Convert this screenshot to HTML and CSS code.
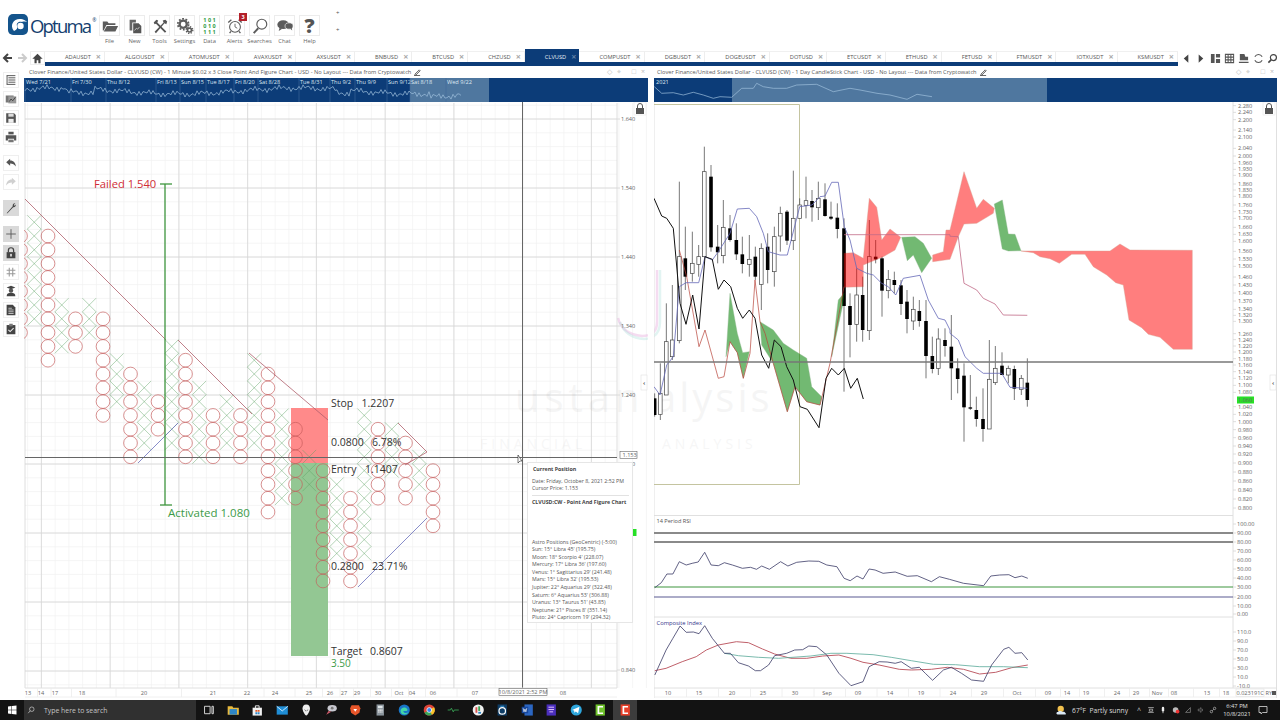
FILE: index.html
```html
<!DOCTYPE html>
<html lang="en">
<head>
<meta charset="utf-8">
<title>Optuma</title>
<link rel="stylesheet" href="styles.css">
</head>
<body>
<div class="app">
  <header class="top">
    <div class="logo">
      <svg class="logo-mark" viewBox="0 0 20 21"><rect x="0" y="0" width="20" height="21" rx="5" fill="#14548c"/><path d="M6 17C1 11 6 4 13 5c4 .6 6 3 6 3-4-1-5 0-5 0-3-1-6 1-5 4 .5 2 0 4-3 5z" fill="#fff"/><circle cx="12.5" cy="12" r="3.2" fill="#fff"/></svg>
      <span class="logo-text">Optuma</span><span class="logo-r">®</span>
    </div>
    <div class="tools">
      <div class="tool"><div class="tbox"><svg viewBox="0 0 20 20"><path d="M2 5h5l1.500 2H16v2H6L3 15H2zM6.500 10H19l-3 6H3z" fill="#5c5c5c"/></svg></div><span>File</span></div>
      <div class="tool"><div class="tbox"><svg viewBox="0 0 20 20"><path d="M4 3h7v3H7v9H4z" fill="#666"/><path d="M8 7h6l3 3v8H8z" fill="#555"/><path d="M9.500 15l2-2.500 1.500 1 2-2.500" stroke="#ddd" stroke-width=".8" fill="none"/></svg></div><span>New</span></div>
      <div class="tool"><div class="tbox"><svg viewBox="0 0 20 20"><path d="M4 16.500L14 6l-1-2 3-1 2 2-1 3-2-1L5.500 18z" fill="#555"/><path d="M3 6l3-3 2 1-1 2 10 10-1.500 1.500L5.500 7.500 4 8z" fill="#555"/></svg></div><span>Tools</span></div>
      <div class="tool"><div class="tbox"><svg viewBox="0 0 20 20"><circle cx="8" cy="8" r="4" fill="none" stroke="#5c5c5c" stroke-width="2.600"/><circle cx="8" cy="8" r="6" fill="none" stroke="#5c5c5c" stroke-width="2" stroke-dasharray="2 1.770"/><circle cx="15" cy="14.500" r="2.200" fill="none" stroke="#5c5c5c" stroke-width="1.800"/><circle cx="15" cy="14.500" r="3.700" fill="none" stroke="#5c5c5c" stroke-width="1.500" stroke-dasharray="1.500 1.400"/></svg></div><span>Settings</span></div>
      <div class="tool"><div class="tbox tdata">1 0 1<br>0 1 0<br>1 1 1</div><span>Data</span></div>
      <div class="tool"><div class="tbox"><svg viewBox="0 0 20 20"><circle cx="10" cy="11" r="6" fill="none" stroke="#5c5c5c" stroke-width="1.200"/><path d="M10 7.500V11l2.500 1.500" stroke="#5c5c5c" stroke-width="1" fill="none"/><path d="M2.500 6L6 3M17.500 6L14 3M5.500 16l-1.500 2M14.500 16l1.500 2" stroke="#5c5c5c" stroke-width="1.500"/></svg></div><b class="badge">3</b><span>Alerts</span></div>
      <div class="tool"><div class="tbox"><svg viewBox="0 0 20 20"><circle cx="12" cy="8" r="5.500" fill="none" stroke="#5c5c5c" stroke-width="1.300"/><path d="M8 12.500L3 18" stroke="#5c5c5c" stroke-width="2.200"/></svg></div><span>Searches</span></div>
      <div class="tool"><div class="tbox"><svg viewBox="0 0 20 20"><ellipse cx="8" cy="8.500" rx="6.500" ry="4.800" fill="#5c5c5c"/><path d="M4 12l-1 3.500 4-2.500z" fill="#5c5c5c"/><ellipse cx="14.500" cy="10" rx="4.500" ry="3.500" fill="#5c5c5c" stroke="#fff" stroke-width=".7"/><path d="M16 13l2 2-.5-3z" fill="#5c5c5c"/></svg></div><span>Chat</span></div>
      <div class="tool"><div class="tbox thelp">?</div><span>Help</span></div>
    </div>
    <div class="plus"><i>+</i><i>+</i></div>
  </header>

  <nav class="tabbar">
    <div class="tabnav">
      <svg viewBox="0 0 15 14"><path d="M12 7H5M8 3L4 7l4 4" stroke="#444" stroke-width="2" fill="none"/></svg>
      <svg viewBox="0 0 15 14"><path d="M3 7h7M7 3l4 4-4 4" stroke="#ccc" stroke-width="2" fill="none"/></svg>
      <svg class="home" viewBox="0 0 15 14"><path d="M7.500 2L1.500 8H4v5h2.500V9.500h2V13H11V8h2.500z" fill="#444"/></svg>
    </div>
    <div class="tabs">
      <div class="tab"><span>ADAUSDT</span><b>×</b></div>
      <div class="tab"><span>ALGOUSDT</span><b>×</b></div>
      <div class="tab"><span>ATOMUSDT</span><b>×</b></div>
      <div class="tab"><span>AVAXUSDT</span><b>×</b></div>
      <div class="tab"><span>AXSUSDT</span><b>×</b></div>
      <div class="tab"><span>BNBUSD</span><b>×</b></div>
      <div class="tab"><span>BTCUSD</span><b>×</b></div>
      <div class="tab"><span>CHZUSD</span><b>×</b></div>
      <div class="tab active"><span>CLVUSD</span><b>×</b></div>
      <div class="tab"><span>COMPUSDT</span><b>×</b></div>
      <div class="tab"><span>DGBUSDT</span><b>×</b></div>
      <div class="tab"><span>DOGEUSDT</span><b>×</b></div>
      <div class="tab"><span>DOTUSD</span><b>×</b></div>
      <div class="tab"><span>ETCUSDT</span><b>×</b></div>
      <div class="tab"><span>ETHUSD</span><b>×</b></div>
      <div class="tab"><span>FETUSD</span><b>×</b></div>
      <div class="tab"><span>FTMUSDT</span><b>×</b></div>
      <div class="tab"><span>IOTXUSDT</span><b>×</b></div>
      <div class="tab"><span>KSMUSDT</span><b>×</b></div>
    </div>
    <div class="tabright">
      <svg viewBox="0 0 12 12"><path d="M8 1.500L3 6l5 4.500z" fill="#444"/></svg>
      <svg viewBox="0 0 12 12"><path d="M4 1.500L9 6l-5 4.500z" fill="#444"/></svg>
      <svg viewBox="0 0 12 12"><path d="M1 1h4v10H1zM6.500 1H11v4H6.500zM6.500 6.500H11V11H6.500z" fill="#555"/></svg>
      <svg viewBox="0 0 12 12"><path d="M1.500 1v10M4.500 1v10M7.500 1v10M10.500 1v10M1 1.500h10M1 4.500h10M1 7.500h10M1 10.500h10" stroke="#555" stroke-width="1.100" fill="none"/></svg>
      <svg viewBox="0 0 12 12"><path d="M2 1h5l1 3h3v4H2zM1 9.500h10.500V11H1z" fill="#555"/></svg>
      <svg viewBox="0 0 12 12"><path d="M2 4a4.500 4.500 0 0 1 8 0M10 8a4.500 4.500 0 0 1-8 0" stroke="#555" stroke-width="1.100" fill="none"/></svg>
      <svg viewBox="0 0 12 12"><circle cx="7" cy="5" r="3.300" fill="none" stroke="#444" stroke-width="1.300"/><path d="M4.500 7.500L1.500 10.500" stroke="#444" stroke-width="1.800"/></svg>
    </div>
  </nav>

  <main class="work">
    <aside class="side">
      <div class="sbtn"><svg viewBox="0 0 16 16"><path d="M3 3h10M5 5.500h8M5 8h8M5 10.500h8M3 13h10M3.500 3v10" stroke="#555" stroke-width="1.100" fill="none"/></svg></div>
      <div class="sbtn"><svg viewBox="0 0 16 16"><path d="M2 4h9v8H2z" fill="#777"/><path d="M5 5h9v8H5z" fill="#999"/><path d="M6 11l2-3 2 2 3-4" stroke="#333" stroke-width=".9" fill="none"/></svg></div>
      <div class="sbtn"><svg viewBox="0 0 16 16"><path d="M2.500 2.500h9l2 2v9h-11z" fill="#555"/><path d="M5 3h6v3.500H5z" fill="#ddd"/><path d="M5 9h6v4.500H5z" fill="#eee"/></svg></div>
      <div class="sbtn"><svg viewBox="0 0 16 16"><path d="M5 2h6v3H5z" fill="#555"/><path d="M2 6h12v6h-2.500v-2h-7v2H2z" fill="#555"/><path d="M5 11h6v3H5z" fill="#777"/></svg></div>
      <div class="sbtn gap"><svg viewBox="0 0 16 16"><path d="M7 3L2.500 7 7 11V8.500c3 0 5 1 6.500 3.500 0-4-2.500-7-6.500-7z" fill="#555"/></svg></div>
      <div class="sbtn"><svg viewBox="0 0 16 16"><path d="M9 3l4.500 4L9 11V8.500c-3 0-5 1-6.500 3.500 0-4 2.500-7 6.500-7z" fill="#d0d0d0"/></svg></div>
      <div class="sbtn gap on"><svg viewBox="0 0 16 16"><path d="M3 14l7-8c-.5-2 1-3.500 3-3.300L11 4.500l1 1 1.500-1.500c.3 2-1.500 3.500-3 3L4 14z" fill="#444"/></svg></div>
      <div class="sbtn gap on"><svg viewBox="0 0 16 16"><path d="M8 2.500v11M2.500 8h11" stroke="#555" stroke-width="1"/></svg></div>
      <div class="sbtn on"><svg viewBox="0 0 16 16"><path d="M5 7V5a3 3 0 0 1 6 0v2" stroke="#444" stroke-width="1.400" fill="none"/><rect x="3" y="7" width="10" height="7" fill="#444"/><rect x="7" y="9" width="2" height="3" fill="#ddd"/></svg></div>
      <div class="sbtn"><svg viewBox="0 0 16 16"><path d="M6 3v10M10 3v10M3 6h10M3 10h10" stroke="#999" stroke-width="1.200"/></svg></div>
      <div class="sbtn"><svg viewBox="0 0 16 16"><path d="M3 4l5-2 5 2-5 2z" fill="#444"/><circle cx="8" cy="7.500" r="2.500" fill="#555"/><path d="M3 14c0-3 2-4 5-4s5 1 5 4z" fill="#444"/></svg></div>
      <div class="sbtn"><svg viewBox="0 0 16 16"><path d="M3 2h7l3 3v9H3z" fill="#444"/><path d="M5 6h4M5 8h6M5 10h6M5 12h6" stroke="#eee" stroke-width=".8"/></svg></div>
      <div class="sbtn"><svg viewBox="0 0 16 16"><path d="M3 3.500h10V14H3z" fill="#444"/><path d="M6 2h4v3H6z" fill="#777"/><path d="M5 9l2 2 4-4" stroke="#eee" stroke-width="1.200" fill="none"/></svg></div>
    </aside>

    <section class="panel">
      <div class="ptitle"><span>Clover Finance/United States Dollar - CLVUSD (CW) - 1 Minute $0.02 x 3 Close Point And Figure Chart - USD - No Layout --- Data from Cryptowatch</span>
        <svg class="pen" viewBox="0 0 8 8"><path d="M1 6L6 1l1 1-5 5zM0 7.500h7" stroke="#333" fill="none" stroke-width=".9"/></svg>
        <div class="pctl"><i>◇</i><i>⌖</i><i class="sp">□</i><i>×</i></div></div>
      <svg id="strip1" class="strip" viewBox="24 78 624 24"></svg>
      <div class="chart">
        <svg id="pf" viewBox="24 102 624 598"></svg>
        <div class="tip">
          <b class="tip-h">Current Position</b>
          <p class="tip-d">Date: Friday, October 8, 2021 2:52 PM<br>Cursor Price: 1.153</p>
          <b class="tip-s">CLVUSD:CW - Point And Figure Chart</b>
          <p class="tip-a">Astro Positions (GeoCentric) (-5:00)<br>Sun: 15° Libra 45' (195.75)<br>Moon: 18° Scorpio 4' (228.07)<br>Mercury: 17° Libra 36' (197.60)<br>Venus: 1° Sagittarius 29' (241.48)<br>Mars: 15° Libra 32' (195.53)<br>Jupiter: 22° Aquarius 29' (322.48)<br>Saturn: 6° Aquarius 53' (306.88)<br>Uranus: 13° Taurus 51' (43.85)<br>Neptune: 21° Pisces 8' (351.14)<br>Pluto: 24° Capricorn 19' (294.32)</p>
        </div>
      </div>
    </section>

    <section class="panel right">
      <div class="ptitle"><span>Clover Finance/United States Dollar - CLVUSD (CW) - 1 Day CandleStick Chart - USD - No Layout --- Data from Cryptowatch</span>
        <svg class="pen" viewBox="0 0 8 8"><path d="M1 6L6 1l1 1-5 5zM0 7.500h7" stroke="#333" fill="none" stroke-width=".9"/></svg>
        <div class="pctl"><i>◇</i><i>⌖</i><i class="sp">□</i><i>×</i></div></div>
      <svg id="strip2" class="strip" viewBox="654 78 623 24"></svg>
      <div class="chart"><svg id="ichi" viewBox="654 102 623 598"></svg></div>
    </section>
  </main>

  <footer class="taskbar">
    <svg class="win" viewBox="0 0 10 10"><path d="M1 1.600l3.500-.5v3.600H1zM5 1l4.500-.6v4.300H5zM1 5.300h3.500v3.600L1 8.400zM5 5.300h4.500v4.300L5 9z" fill="#fff"/></svg>
    <div class="search"><svg viewBox="0 0 10 10"><circle cx="6" cy="4" r="2.800" fill="none" stroke="#ddd" stroke-width=".8"/><path d="M4 6L1.500 9" stroke="#ddd" stroke-width=".8"/></svg><span>Type here to search</span></div>
    <div class="apps">
      <svg viewBox="0 0 14 14"><path d="M3 3h6v8H3zM11 3h1.500v8H11z" fill="none" stroke="#ddd" stroke-width="1"/></svg>
      <svg viewBox="0 0 14 14"><path d="M1 3h5l1 1.500h6V12H1z" fill="#e8b93d"/><path d="M3 6h8v6H3z" fill="#2f86c5"/></svg>
      <svg viewBox="0 0 14 14"><path d="M2 4.500h10V13H2z" fill="#f2f2f2"/><path d="M5 5V2.500h4V5" stroke="#f2f2f2" fill="none"/><path d="M5 7h2v2H5zM7.500 7h2v2h-2z" fill="#e05b2b"/><path d="M5 9.500h2v2H5zM7.500 9.500h2v2h-2z" fill="#2f86c5"/></svg>
      <svg viewBox="0 0 14 14"><path d="M1 3h12v9H1z" fill="#1f8ed6"/><path d="M1 3l6 5 6-5" stroke="#cfeaff" fill="none"/></svg>
      <svg viewBox="0 0 14 14"><path d="M7 1c3 0 4 2 4 4.500S8.500 13 7 13 3 8 3 5.500 4 1 7 1z" fill="#eee"/><path d="M4.500 6l2 1.500v1zM9.500 6l-2 1.500v1z" fill="#222"/></svg>
      <svg viewBox="0 0 14 14"><ellipse cx="8" cy="5" rx="5" ry="3.500" fill="#c8c8d0"/><path d="M4 8l-2.500 4L7 9z" fill="#d05a6a"/><circle cx="8" cy="5" r="1.500" fill="#777"/></svg>
      <svg viewBox="0 0 14 14"><path d="M3 2h8l1.500 3-1 5L7 13 2.500 10l-1-5z" fill="#e8562a"/><path d="M5 6h4L7 9z" fill="#fff"/></svg>
      <svg viewBox="0 0 14 14"><path d="M3 1h8v12H3z" fill="#8a949c"/><path d="M4.500 2.500h5v2.500h-5z" fill="#dfe5e8"/><path d="M4.500 6.500h1.500v1.200H4.500zM6.300 6.500h1.500v1.200H6.300zM8.100 6.500h1.500v1.200H8.100zM4.500 8.500h1.500v1.200H4.500zM6.300 8.500h1.500v1.200H6.300zM8.100 8.500h1.500v1.200H8.100z" fill="#eee"/></svg>
      <svg viewBox="0 0 14 14"><circle cx="7" cy="7" r="6" fill="#1976c9"/><path d="M3 8c0-3 3-4.500 5.500-3.500C11 5.500 11 8 9 8H6c0 2 3 3 5.500 1.500C10 12.500 3 13 3 8z" fill="#44d6a8"/></svg>
      <svg viewBox="0 0 14 14"><circle cx="7" cy="7" r="6" fill="#de4437"/><path d="M7 7L1.800 10A6 6 0 0 0 10 12.200z" fill="#3aa757"/><path d="M7 7L10 12.200A6 6 0 0 0 12.200 4z" fill="#f7c52b"/><circle cx="7" cy="7" r="2.600" fill="#3c84ef" stroke="#fff" stroke-width=".8"/></svg>
      <svg viewBox="0 0 14 14"><path d="M1 7h3l1-2 2 4 1-2h5" stroke="#3aa757" fill="none" stroke-width=".9"/></svg>
      <svg viewBox="0 0 14 14"><circle cx="7" cy="7" r="6" fill="#f1f1f1"/><path d="M4 4h2v6H4z" fill="#d9534f"/><path d="M7 3h2v5H7z" fill="#3aa757"/><path d="M7 9h3v2H7z" fill="#2f86c5"/></svg>
      <svg viewBox="0 0 14 14"><path d="M2 1h10v12H2z" fill="#0e3d66"/><circle cx="7" cy="8" r="3.500" fill="none" stroke="#fff" stroke-width="1.300"/><path d="M5 3h4" stroke="#3aa0e0"/></svg>
      <svg viewBox="0 0 14 14"><path d="M4 1h9v12H4z" fill="#2b66c2"/><path d="M1 3.500h7v7H1z" fill="#17479c"/><path d="M2.500 5l1 4 1-3 1 3 1-4" stroke="#fff" fill="none" stroke-width=".7"/></svg>
      <svg viewBox="0 0 14 14"><path d="M2 1h10v12H2z" fill="#4b2fbd"/><path d="M4 4h6M4 6.500h6M5 9h4" stroke="#e8c9ff"/></svg>
      <svg viewBox="0 0 14 14"><circle cx="7" cy="7" r="6" fill="#2ea6dc"/><path d="M2.500 7l8-3.500-1.500 7-2.500-2-1.500 1.500-.3-2.500z" fill="#fff"/></svg>
      <svg viewBox="0 0 14 14"><path d="M2 1h10v12H2z" fill="#6fc32c"/><path d="M10 3.500H5v7h5" stroke="#fff" stroke-width="1.800" fill="none"/></svg>
      <svg class="now" viewBox="0 0 14 14"><path d="M2 1h10v12H2z" fill="#e8402a"/><path d="M10 3.500H5v7h5" stroke="#fff" stroke-width="1.800" fill="none"/></svg>
    </div>
    <div class="tray">
      <svg class="wx" viewBox="0 0 14 14"><circle cx="6" cy="5" r="4" fill="#f2c14e"/><path d="M2 12c-2 0-2-3 .5-3 .5-2 5-2 5.500 0 1-1 4-.5 4 1.500 1 0 1 1.500 0 1.500z" fill="#dbe9f6"/></svg>
      <span class="wxt">67°F&nbsp; Partly sunny</span>
      <i class="caret">^</i>
      <div class="tic">
        <svg viewBox="0 0 10 10"><path d="M1.500 2h7M1.500 8h7M3 4h4v2.500H3z" stroke="#ddd" fill="none" stroke-width=".8"/></svg>
        <svg viewBox="0 0 10 10"><rect x="3.500" y="1" width="3" height="6" rx="1.500" fill="#eee"/><path d="M5 7v2" stroke="#eee"/></svg>
        <svg viewBox="0 0 10 10"><circle cx="4.500" cy="5" r="3.500" fill="#bbb"/><circle cx="7" cy="7" r="2.300" fill="#e33"/></svg>
        <svg viewBox="0 0 10 10"><path d="M2 8l6-6v6z" fill="none" stroke="#aaa" stroke-width=".7"/></svg>
        <svg viewBox="0 0 10 10"><path d="M1.500 4h1.500l2-2v6l-2-2H1.500zM6.500 3.500q1 1.500 0 3" fill="none" stroke="#999" stroke-width=".7"/></svg>
        <svg viewBox="0 0 10 10"><circle cx="3" cy="7" r="1.500" fill="none" stroke="#ddd" stroke-width=".7"/><circle cx="7" cy="3" r="1.500" fill="none" stroke="#ddd" stroke-width=".7"/><path d="M4 6l2-2" stroke="#ddd" stroke-width=".7"/></svg>
      </div>
      <div class="clock"><span>6:47 PM</span><span>10/8/2021</span></div>
      <svg class="notif" viewBox="0 0 10 10"><path d="M1 1.500h8v6H4.500L3 9V7.500H1z" fill="none" stroke="#ddd" stroke-width=".8"/></svg>
    </div>
  </footer>
</div>
<script src="script.js"></script>
</body>
</html>
```
FILE: styles.css
```css
* { box-sizing: border-box; margin: 0; padding: 0; }
html, body { width: 1280px; height: 720px; overflow: hidden; background: #fff; }
body { font-family: "Open Sans", "Liberation Sans", sans-serif; color: #555; }
i { font-style: normal; }
.app { width: 1280px; height: 720px; display: flex; flex-direction: column; }

/* header */
.top { height: 49px; display: flex; align-items: flex-start; flex: none; }
.logo { width: 97px; padding: 14px 0 0 8px; display: flex; align-items: flex-start; overflow: hidden; }
.logo-mark { width: 20px; height: 21px; flex: none; }
.logo-text { font-size: 18.500px; line-height: 24px; color: #14406f; margin-left: 2px; letter-spacing: -1.800px; }
.logo-r { font-size: 5px; line-height: 12px; color: #14406f; margin-left: 2px; }
.tools { display: flex; padding-top: 15px; }
.tool { width: 25px; display: flex; flex-direction: column; align-items: center; position: relative; }
.tool span { font-size: 5.800px; line-height: 8px; margin-top: 1px; color: #666; white-space: nowrap; }
.tbox { width: 21px; height: 21px; border: 1px solid #ececec; display: flex; align-items: center; justify-content: center; background: #fff; }
.tbox svg { width: 18px; height: 18px; }
.tdata { color: #2f9a3f; font-size: 5.500px; line-height: 6px; text-align: center; font-weight: 700; }
.thelp { color: #555; font-size: 20px; font-weight: 800; line-height: 20px; }
.badge { position: absolute; top: -2px; right: 0; width: 8px; height: 8px; background: #b3202a; color: #fff; font-size: 5.500px; line-height: 8px; text-align: center; }
.plus { margin-left: 14px; padding-top: 9px; display: flex; flex-direction: column; gap: 9px; color: #555; font-size: 6px; line-height: 8px; }

/* tabs */
.tabbar { height: 17px; flex: none; display: flex; }
.tabnav { width: 45px; flex: none; display: flex; align-items: flex-start; padding-top: 2px; }
.tabnav svg { width: 15px; height: 14px; }
.tabnav .home { border: 1px solid #eee; }
.tabs { width: 1133px; flex: none; display: flex; border-bottom: 4px solid #0c3c78; padding-top: 2px; }
.tab { flex: 1 1 auto; display: flex; justify-content: space-between; align-items: center; padding: 0 3px 0 20px; border-right: 1px solid #eee; border-top: 1px solid #f0f0f0; font-size: 5.700px; color: #555; }
.tab span { white-space: nowrap; }
.tab b { font-size: 9px; line-height: 8px; color: #aaa; margin-left: 4px; }
.tab.active { background: #0c3c78; color: #e8eef5; margin-top: -2px; padding-top: 2px; border: 0; }
.tab.active b { color: #5f7fa5; }
.tabright { flex: 1; display: flex; justify-content: space-between; padding: 4px 2px 0 3px; }
.tabright svg { width: 11px; height: 11px; }

/* body */
.work { flex: 1; min-height: 0; display: flex; }
.side { width: 24px; flex: none; padding: 6px 0 0 3px; display: flex; flex-direction: column; gap: 3px; }
.sbtn { width: 16px; height: 16px; border: 1px solid #efefef; }
.sbtn svg { display: block; width: 14px; height: 14px; }
.sbtn.gap { margin-top: 7px; }
.sbtn.on { background: #d9d9d9; border-color: #d9d9d9; }
.panel { width: 624px; flex: none; display: flex; flex-direction: column; }
.panel.right { width: 623px; margin-left: 6px; }
.ptitle { height: 12px; flex: none; display: flex; align-items: center; padding-left: 5px; font-size: 5.700px; color: #5a5a5a; white-space: nowrap; }
.right .ptitle { padding-left: 3px; }
.pen { width: 7px; height: 7px; margin-left: 3px; }
.pctl { margin-left: auto; display: flex; gap: 5px; padding-right: 3px; color: #bbb; font-size: 7px; line-height: 8px; }
.pctl .sp { margin-left: 6px; }
.strip { display: block; width: 100%; height: 24px; flex: none; background: #0c3c78; }
.chart { flex: 1; min-height: 0; position: relative; }
.chart > svg { display: block; width: 100%; height: 100%; }

/* tooltip over the chart */
.tip { position: absolute; left: 503px; top: 360px; width: 106px; height: 161px; background: #fff; border: 1px solid #e6e6e6; padding: 3px 3px 0 4px; font-size: 5.250px; line-height: 7.550px; color: #555; white-space: nowrap; }
.tip b { display: block; font-weight: 700; color: #444; }
.tip-h { padding-left: 1px; }
.tip-d { margin-top: 4px; padding-bottom: 2px; border-bottom: 1px solid #e2e2e2; }
.tip-s { margin-top: 3px; }
.tip-a { margin-top: 32.500px; }

/* svg chart parts */
.maj { stroke: #d6d6d6; stroke-width: .8; }
.min { stroke: #f0f0f0; stroke-width: .7; }
.ox { stroke: #5aa060; stroke-width: .65; opacity: .7; fill: none; }
.oo { stroke: #c65a5a; stroke-width: .65; fill: none; }
.tl-r { stroke: #b0606c; stroke-width: .8; }
.tl-b { stroke: #6a70bb; stroke-width: .8; }
.act { stroke: #3f963f; stroke-width: 1.300; }
.cur { stroke: #666; stroke-width: 1; }
.ax { font-family: "Open Sans", sans-serif; font-size: 5.600px; fill: #666; }
.axm { text-anchor: middle; }
.big { font-family: "Open Sans", sans-serif; font-size: 10.500px; fill: #333; }
.fail { font-size: 11.200px; fill: #d02c36; }
.actv { font-size: 11.500px; fill: #3c9a48; }
.three { fill: #3c9a48; font-size: 10px; }
.rr { fill: #ff8a8a; }
.gr { fill: #93c793; }
.wm { font-family: "Open Sans", sans-serif; font-size: 40px; letter-spacing: 5px; fill: #000; opacity: .035; }
.wm.tight { letter-spacing: 3px; }
.wm2 { font-family: "Open Sans", sans-serif; font-size: 14px; letter-spacing: 4px; fill: #000; opacity: .03; }
.j1 { fill: none; stroke: #e6a8dd; stroke-width: 2.500; opacity: .4; }
.j2 { fill: none; stroke: #9fdbd4; stroke-width: 2.500; opacity: .3; }
.wick { stroke: #555; stroke-width: .8; }
.cb { fill: #000; }
.cw { fill: #fff; stroke: #444; stroke-width: .7; }
.cred { fill: #ff0000; opacity: .5; stroke: #b04020; stroke-width: .4; }
.cgrn { fill: #008000; opacity: .55; stroke: #2c7a2c; stroke-width: .4; }
.blk { fill: none; stroke: #111; stroke-width: 1; }
.blu { fill: none; stroke: #6468b8; stroke-width: .8; }
.red { fill: none; stroke: #b8433a; stroke-width: .7; }
.pnk { fill: none; stroke: #c06a86; stroke-width: .8; }
.tan { fill: none; stroke: #bdbd95; stroke-width: .9; }
.hgr { stroke: #777; stroke-width: 1.400; }
.hgr2 { stroke: #8a8a8a; stroke-width: 2; }
.sep { stroke: #dcdcdc; stroke-width: .9; }
.sep2 { stroke: #ececec; stroke-width: .8; }
.lv-g { stroke: #3f963f; stroke-width: 1.200; }
.lv-b { stroke: #5a5a92; stroke-width: 1.200; }
.c1 { fill: none; stroke: #3a3a66; stroke-width: .8; }
.c2 { fill: none; stroke: #c0606a; stroke-width: 1; }
.c3 { fill: none; stroke: #58a898; stroke-width: .8; }
.lab1 { font-family: "Open Sans", sans-serif; font-size: 5.600px; fill: #555; }
.lab2 { font-family: "Open Sans", sans-serif; font-size: 5.800px; fill: #33338a; }
.curbox { fill: #fff; stroke: #666; stroke-width: .6; }
.green { fill: #26e026; }
.lockb { fill: #fff; stroke: #eee; stroke-width: .8; }
.lockp { fill: #555; }
.lockl { fill: none; stroke: #555; stroke-width: 1; }
.col { fill: #fff; stroke: #e0e0e0; stroke-width: .6; }
.colt { fill: #555; font-family: "Open Sans", sans-serif; font-size: 6px; font-weight: 700; text-anchor: middle; }
.sp-t { font-family: "Open Sans", sans-serif; font-size: 5.600px; fill: #dfe8f2; }
.sp-w { fill: #4f779f; }
.sp-l { fill: none; stroke: #9fc0dc; stroke-width: .7; }
.sp-v { stroke: #41689a; stroke-width: .6; }
.ptr { fill: #fff; stroke: #222; stroke-width: .6; }

/* taskbar */
.taskbar { height: 20px; flex: none; background: #131313; display: flex; align-items: center; }
.win { width: 10px; height: 10px; margin: 0 7px; flex: none; }
.search { width: 172px; height: 20px; background: #303030; display: flex; align-items: center; padding-left: 3px; flex: none; color: #c4c4c4; font-size: 6.900px; }
.search svg { width: 8px; height: 8px; margin-right: 9px; }
.apps { display: flex; align-items: center; }
.apps svg { width: 24.500px; height: 20px; padding: 3.500px 5.500px; flex: none; }
.apps .now { background: #3c3c3c; }
.tray { margin-left: auto; display: flex; align-items: center; }
.wx { width: 11px; height: 11px; }
.wxt { font-size: 6.700px; color: #ddd; margin-left: 5.500px; white-space: nowrap; }
.caret { color: #ccc; font-size: 7px; margin-left: 9px; }
.tic { display: flex; gap: 4.400px; margin-left: 6px; }
.tic svg { width: 8px; height: 8px; }
.clock { display: flex; flex-direction: column; align-items: center; font-size: 5.800px; line-height: 8px; color: #e0e0e0; margin-left: 9px; width: 22px; white-space: nowrap; }
.notif { width: 10px; height: 10px; margin: 0 12px 0 10px; }
```
FILE: script.js
```js
const pl = (a) => a.map(p => p[0].toFixed(1) + ',' + p[1].toFixed(1)).join(' ');
const Z8 = a => a.map(p => [650 + p[0] / 3, 130 + p[1] / 3]);
const Z9 = a => a.map(p => [950 + p[0] / 3, 100 + p[1] / 3]);
const Z10 = a => a.map(p => [650 + p[0] / 2.488, 510 + p[1] / 3]);
const line = (x1, y1, x2, y2, c) => `<line x1="${x1}" y1="${y1}" x2="${x2}" y2="${y2}" class="${c}"/>`;
const txt = (x, y, s, c) => `<text x="${x}" y="${y}" class="${c}">${s}</text>`;
const poly = (a, c) => `<polygon points="${pl(a)}" class="${c}"/>`;
const path = (a, c) => `<polyline points="${pl(a)}" class="${c}"/>`;
const lock = (x, y) => `<rect x="${x - 6}" y="${y - 7}" width="12" height="13" class="lockb"/><path d="M${x - 2.500} ${y - 1}v-2a2.500 2.500 0 0 1 5 0v2" class="lockl"/><rect x="${x - 4}" y="${y - 1}" width="8" height="6" class="lockp"/>`;
const collapse = (x, y) => `<rect x="${x - 3}" y="${y - 8}" width="6" height="15" class="col"/><text x="${x}" y="${y + 1.500}" class="colt">‹</text>`;
const arc = `<path d="M618 318Q622 334 642 336Q657 336 657 322V270" class="j1"/><path d="M620 322Q626 338 644 339Q660 338 660 322V270" class="j2"/>`;

/* ---------- Point and figure chart ---------- */
(function () {
  let s = '';
  const L = 25, R = 617, T = 103, B = 688;
  for (let i = -1; i < 45; i++) { const x = 41.4 + 13.75 * i; if (x > L) s += line(x, T, x, B, 'min'); }
  for (let j = -1; j < 42; j++) { const y = 119 + 13.8 * j; s += line(L, y, R, y, 'min'); }
  for (let i = 0; i < 9; i++) { const x = 41.4 + 68.75 * i; s += line(x, T, x, B, 'maj'); }
  for (let j = 0; j < 9; j++) { const y = 119 + 69 * j; s += line(L, y, R, y, 'maj'); }
  s += txt(515, 412, 'ustan', 'wm') + txt(480, 449, 'FINANCIAL', 'wm2') + arc;
  s += line(L, 103, L, B, 'maj') + line(R, 103, R, B, 'maj');
  s += `<rect x="291" y="408" width="37" height="55" class="rr"/><rect x="291" y="463" width="37" height="193" class="gr"/>`;
  const cols = [['O', 0, 7], ['X', -1, 6], ['O', 0, 9], ['X', 5, 8], ['O', 6, 8], ['X', 5, 7], ['O', 6, 13], ['X', 9, 12], ['O', 10, 16], ['X', 11, 15], ['O', 12, 14], ['X', 8, 15], ['O', 9, 16], ['X', 11, 16], ['O', 13, 16], ['X', 12, 15], ['O', 13, 16], ['X', 9, 15], ['O', 10, 20], ['X', 13, 19], ['O', 14, 19], ['X', 16, 18], ['O', 17, 25], ['X', 18, 23], ['O', 19, 25], ['X', 13, 23], ['O', 14, 19], ['X', 14, 17], ['O', 15, 19], ['X', 16, 18], ['O', 17, 21]];
  const d = 6.9;
  cols.forEach((c, n) => {
    const x = 48 + 13.75 * (n - 2);
    for (let r = c[1]; r <= c[2]; r++) {
      const y = 236 + 13.8 * r;
      if (c[0] === 'O') s += `<circle cx="${x}" cy="${y}" r="6.850" class="oo"/>`;
      else s += `<path d="M${x - d} ${y - d}L${x + d} ${y + d}M${x - d} ${y + d}L${x + d} ${y - d}" class="ox"/>`;
    }
  });
  s += line(25, 199, 166, 340, 'tl-r') + line(178, 340, 252, 414, 'tl-r') + line(249, 353, 328, 420, 'tl-r') + line(398, 423, 427, 452, 'tl-r') + line(405, 465, 427, 452, 'tl-r');
  s += line(138, 463, 178, 423, 'tl-b') + line(358, 587, 427, 518, 'tl-b');
  s += line(165, 184, 165, 505, 'act') + line(160, 184, 172, 184, 'act') + line(160, 505, 172, 505, 'act');
  s += line(25, 457.5, 617, 457.5, 'cur') + line(522.5, 102, 522.5, 688, 'cur');
  s += txt(94, 188, 'Failed 1.540', 'big fail') + txt(168, 517, 'Activated 1.080', 'big actv');
  s += txt(331, 407, 'Stop', 'big') + txt(361.5, 407, '1.2207', 'big');
  s += txt(331, 446, '0.0800', 'big') + txt(372, 446, '6.78%', 'big');
  s += txt(331, 473, 'Entry', 'big') + txt(365, 473, '1.1407', 'big');
  s += txt(331, 570, '0.2800', 'big') + txt(372, 570, '23.71%', 'big');
  s += txt(331, 655, 'Target', 'big') + txt(370, 655, '0.8607', 'big');
  s += txt(331, 667, '3.50', 'big three');
  [[1.640, 119], [1.540, 188], [1.440, 257], [1.340, 326], [1.240, 395], [1.140, 464], [0.840, 670]].forEach(a => {
    s += line(617, a[1], 620, a[1], 'maj') + txt(621, a[1] + 2, a[0].toFixed(3), 'ax');
  });
  s += `<rect x="620" y="451.500" width="17" height="7" class="curbox"/>` + txt(622.5, 457, '1.153', 'ax');
  s += `<rect x="633" y="529" width="3.500" height="7" class="green"/>`;
  s += line(25, 688, 617, 688, 'sep') + line(25, 697, 617, 697, 'sep2');
  const ax = [[28, '13'], [41, '14'], [55, '17'], [82, '18'], [144, '20'], [213, '21'], [247, '22'], [275, '24'], [309, '25'], [330, '26'], [344, '27'], [357, '29'], [378, '30'], [399, 'Oct'], [412, '04'], [433, '06'], [475, '07'], [563, '08']];
  ax.forEach((a, i) => {
    s += txt(a[0], 694.5, a[1], 'ax axm');
    if (i < ax.length - 1) { const m = (a[0] + ax[i + 1][0]) / 2 + 3; s += line(m, 688, m, 697, 'sep2'); }
  });
  s += `<rect x="499" y="688.500" width="48" height="7" class="curbox"/>` + txt(523, 694.3, '10/8/2021 2:52 PM', 'ax axm');
  s += lock(640, 109) + collapse(644, 383);
  s += `<path d="M518 455l0 8 2-2 2 0z" class="ptr"/>`;
  document.getElementById('pf').innerHTML = s;
})();

/* ---------- Ichimoku chart ---------- */
(function () {
  let s = '';
  s += txt(654, 412, 'alysis', 'wm tight') + txt(662, 449, 'ANALYSIS', 'wm2') + arc;
  s += line(654, 102, 654, 698, 'sep') + line(1233, 102, 1233, 688, 'sep') + line(1276.5, 102, 1276.5, 698, 'sep');
  s += `<path d="M654 104.500H799.500V484.500H654" class="tan"/>`;
  const a8 = [[14, 790, 860, 805, 855, 1], [31, 700, 870, 790, 853, 0], [49, 520, 795, 635, 795, 0], [67, 465, 690, 630, 680, 0], [88, 155, 640, 380, 632, 0], [106, 290, 480, 385, 440, 1], [127, 305, 455, 400, 430, 0], [146, 345, 440, 380, 403, 0], [163, 50, 380, 125, 380, 0], [183, 105, 365, 140, 352, 1], [203, 285, 400, 350, 367, 1], [220, 210, 400, 292, 377, 0], [240, 255, 335, 295, 330, 1], [259, 280, 390, 330, 373, 1], [277, 320, 430, 373, 402, 1], [298, 315, 440, 388, 403, 0], [316, 350, 450, 380, 440, 1], [334, 340, 540, 355, 463, 0], [353, 310, 460, 350, 420, 1], [373, 290, 470, 320, 425, 0], [391, 230, 365, 250, 318, 0], [411, 240, 345, 245, 332, 1], [430, 122, 360, 265, 332, 0], [449, 205, 265, 225, 265, 0], [468, 140, 265, 212, 226, 0], [486, 180, 275, 213, 232, 1], [505, 155, 270, 205, 233, 0], [525, 160, 260, 208, 258, 1], [543, 215, 270, 260, 266, 1], [562, 220, 325, 263, 297, 1], [582, 265, 785, 295, 528, 1], [600, 490, 682, 528, 585, 1], [620, 415, 635, 495, 583, 0], [638, 440, 635, 495, 600, 1], [658, 270, 630, 380, 602, 0], [677, 330, 400, 380, 388, 1], [696, 380, 560, 385, 482, 1], [715, 420, 505, 448, 482, 0], [733, 425, 490, 450, 465, 1], [753, 450, 555, 466, 522, 1], [771, 480, 610, 515, 567, 1], [790, 500, 600, 538, 573, 0], [808, 510, 590, 543, 573, 1], [828, 510, 745, 573, 678, 1], [847, 620, 730, 678, 717, 1], [865, 595, 735, 627, 715, 0], [885, 595, 680, 630, 648, 1]];
  const a9 = [[4, 645, 900, 740, 805, 1], [23, 775, 880, 805, 837, 1], [42, 790, 1025, 827, 922, 1], [61, 825, 930, 922, 926, 1], [79, 890, 980, 930, 957, 1], [99, 865, 1025, 957, 987, 1], [118, 720, 987, 838, 987, 0], [136, 738, 855, 805, 848, 0], [156, 757, 825, 797, 825, 1], [175, 797, 850, 805, 825, 0], [193, 797, 900, 807, 866, 1], [214, 825, 885, 835, 868, 0], [232, 775, 920, 848, 900, 1]];
  const candle = (x, t, b, o, c, f) => line(x, t, x, b, 'wick') + `<rect x="${x - 1.800}" y="${o}" width="3.600" height="${c - o}" class="${f ? 'cb' : 'cw'}"/>`;
  a8.forEach(a => { s += candle(650 + a[0] / 3, 130 + a[1] / 3, 130 + a[2] / 3, 130 + a[3] / 3, 130 + a[4] / 3, a[5]); });
  a9.forEach(a => { s += candle(950 + a[0] / 3, 100 + a[1] / 3, 100 + a[2] / 3, 100 + a[3] / 3, 100 + a[4] / 3, a[5]); });

  s += poly(Z8([[240, 490], [262, 610], [278, 668], [298, 665], [280, 745], [262, 668], [240, 635], [228, 680]]), 'cgrn');
  s += poly(Z8([[330, 575], [370, 600], [400, 640], [430, 660], [470, 685], [485, 770], [515, 800], [510, 825], [470, 815], [435, 770], [412, 845], [370, 700], [335, 645]]), 'cgrn');
  s += poly(Z8([[565, 510], [582, 490], [578, 525], [545, 680]]), 'cgrn');
  s += poly(Z8([[582, 370], [610, 368], [640, 385], [658, 205], [680, 232], [695, 330], [720, 297], [752, 322], [735, 360], [700, 380], [640, 405], [640, 470], [582, 472]]), 'cred');
  s += poly(Z8([[755, 322], [795, 320], [820, 340], [845, 385], [815, 428], [790, 375], [772, 392]]), 'cgrn');
  s += poly(Z8([[848, 375], [880, 365], [888, 300], [900, 300]]).concat(Z9([[0, 390], [42, 215], [80, 325], [100, 298], [133, 325], [130, 340], [80, 370], [42, 372], [25, 410], [0, 478]])).concat(Z8([[848, 395]])), 'cred');
  s += poly(Z9([[133, 312], [157, 300], [175, 402], [195, 403], [213, 452], [175, 453], [157, 447]]), 'cgrn');
  s += poly(Z9([[213, 453], [480, 453], [510, 432], [540, 450], [727, 451], [727, 748], [670, 748], [630, 712], [595, 703], [575, 683], [537, 660], [520, 555], [497, 548], [470, 525], [430, 500], [405, 463], [365, 463], [328, 490], [300, 476], [270, 470], [250, 458]]), 'cred');

  s += path(Z8([[88, 360], [110, 440], [147, 650], [165, 600], [205, 745], [222, 740], [240, 635], [262, 668], [280, 745], [300, 670], [315, 450], [330, 575], [345, 610], [370, 700], [412, 845], [435, 770], [470, 815], [510, 825], [540, 700], [582, 470]]), 'red');
  s += path(Z8([[582, 314], [900, 314]]).concat(Z9([[0, 409], [25, 410], [42, 550], [80, 570], [100, 595], [135, 612], [160, 645], [232, 646]])), 'pnk');
  s += path(Z8([[12, 770], [30, 795], [50, 705], [70, 680], [88, 470], [108, 458], [146, 458], [165, 380], [187, 390], [205, 365], [240, 310], [262, 237], [298, 235], [320, 260], [340, 310], [355, 365], [390, 375], [412, 375], [440, 265], [449, 230], [486, 225], [510, 200], [525, 198], [545, 157], [565, 157], [583, 290], [600, 330], [620, 415], [650, 430], [670, 435], [695, 460], [715, 470], [737, 495], [760, 445], [810, 436], [835, 510], [865, 565], [885, 570], [900, 600]]).concat(Z9([[0, 700], [25, 720], [45, 770], [80, 805], [100, 820], [155, 820], [180, 862], [232, 865]])), 'blu');
  s += path(Z8([[12, 205], [35, 258], [50, 265], [70, 295], [90, 520], [108, 583], [128, 495], [147, 597], [165, 380], [187, 388], [205, 478], [222, 450], [242, 470], [262, 535], [278, 565], [298, 540], [315, 565], [335, 675], [356, 715], [373, 630], [393, 650], [410, 710], [430, 750], [450, 830], [472, 838], [507, 893], [528, 745], [545, 715], [565, 735], [583, 715], [602, 775], [622, 745], [640, 807]]), 'blk');
  s += line(654, 362, 1233, 362, 'hgr');

  const pr = [['2.280', 17], ['2.240', 37], ['2.200', 59], ['2.140', 90], ['2.100', 111], ['2.040', 145], ['2.000', 168], ['1.960', 190], ['1.930', 208], ['1.900', 226], ['1.860', 252], ['1.830', 270], ['1.800', 289], ['1.760', 315], ['1.730', 335], ['1.700', 355], ['1.660', 382], ['1.630', 403], ['1.600', 424], ['1.560', 454], ['1.530', 477], ['1.500', 499], ['1.460', 531], ['1.430', 555], ['1.400', 579], ['1.370', 603], ['1.340', 628], ['1.320', 646], ['1.300', 664], ['1.260', 701], ['1.240', 719], ['1.220', 738], ['1.200', 756], ['1.180', 776], ['1.160', 795], ['1.140', 815], ['1.120', 835], ['1.100', 856], ['1.080', 877], ['1.040', 920], ['1.020', 943], ['1.000', 965], ['0.980', 989], ['0.960', 1013], ['0.940', 1038], ['0.920', 1062]];
  pr.forEach(a => { const y = 100 + a[1] / 3; s += line(1233, y, 1236, y, 'maj') + txt(1238, y + 2, a[0], 'ax'); });
  [['0.900', 463], ['0.880', 472], ['0.860', 481], ['0.840', 490], ['0.820', 499], ['0.800', 508]].forEach(a => { s += line(1233, a[1], 1236, a[1], 'maj') + txt(1238, a[1] + 2, a[0], 'ax'); });
  s += `<rect x="1237" y="396.500" width="17" height="7" class="green"/>` + txt(1238, 402, '1.060', 'ax');
  s += lock(1269, 109) + collapse(1273, 383);

  s += line(654, 515.5, 1233, 515.5, 'sep') + line(654, 617, 1233, 617, 'sep') + line(654, 688, 1277, 688, 'sep') + line(654, 697, 1277, 697, 'sep2');
  s += txt(656.5, 523, '14 Period RSI', 'lab1');
  s += line(654, 533, 1233, 533, 'hgr2') + line(654, 542, 1233, 542, 'hgr2') + line(654, 587, 1233, 587, 'lv-g') + line(654, 597, 1233, 597, 'lv-b');
  [['100.00', 524], ['90.00', 533], ['80.00', 542], ['70.00', 551], ['60.00', 560], ['50.00', 569], ['40.00', 578], ['30.00', 587], ['20.00', 597], ['10.00', 606], ['0.00', 614]].forEach(a => { s += line(1233, a[1], 1236, a[1], 'maj') + txt(1237, a[1] + 2, a[0], 'ax'); });
  s += path(Z10([[12, 233], [28, 218], [42, 192], [57, 192], [73, 155], [90, 165], [105, 160], [120, 156], [136, 127], [152, 165], [170, 167], [185, 158], [205, 165], [230, 175], [250, 172], [265, 178], [278, 168], [297, 178], [325, 155], [343, 168], [365, 157], [395, 153], [420, 154], [440, 165], [465, 170], [483, 205], [498, 212], [515, 198], [530, 207], [545, 177], [560, 180], [580, 190], [610, 186], [640, 199], [665, 197], [700, 215], [720, 200], [745, 208], [780, 220], [830, 227], [848, 198], [870, 195], [893, 194], [908, 203], [925, 198], [940, 205]]), 'c1');

  s += txt(656.5, 625, 'Composite Index', 'lab2');
  [['110.0', 632], ['90.0', 641], ['70.0', 650], ['50.0', 659], ['30.0', 668], ['10.0', 677], ['-10.0', 686]].forEach(a => { s += line(1233, a[1], 1236, a[1], 'maj') + txt(1237, a[1] + 2, a[0], 'ax'); });
  s += path(Z10([[12, 482], [40, 475], [80, 455], [115, 440], [140, 420], [170, 405], [215, 395], [245, 398], [280, 417], [310, 432], [350, 445], [390, 445], [430, 438], [470, 435], [500, 445], [530, 457], [570, 465], [620, 478], [650, 480], [700, 478], [740, 472], [780, 478], [820, 492], [860, 487], [900, 473], [940, 465]]), 'c2');
  s += path(Z10([[185, 430], [220, 437], [270, 442], [320, 445], [400, 438], [450, 430], [490, 430], [555, 434], [600, 442], [650, 452], [705, 463], [760, 464], [820, 470], [880, 470], [940, 473]]), 'c3');
  s += path(Z10([[12, 495], [40, 420], [57, 385], [75, 348], [90, 367], [108, 366], [122, 371], [136, 347], [155, 385], [185, 430], [200, 430], [220, 458], [245, 468], [262, 482], [275, 482], [295, 465], [310, 437], [340, 430], [360, 420], [380, 419], [395, 408], [415, 410], [440, 435], [470, 490], [500, 527], [530, 515], [545, 470], [570, 455], [590, 456], [610, 460], [625, 455], [650, 475], [670, 472], [685, 490], [703, 511], [730, 480], [750, 472], [775, 490], [800, 510], [830, 514], [850, 465], [880, 418], [893, 412], [908, 430], [925, 428], [940, 450]]), 'c1');

  const ax = [[668, '10'], [699, '15'], [732, '20'], [763, '25'], [795, '30'], [827, 'Sep'], [858, '09'], [890, '14'], [921, '19'], [953, '24'], [984, '29'], [1017, 'Oct'], [1048, '09'], [1067, '14'], [1086, '19'], [1117, '24'], [1136, '29'], [1157, 'Nov'], [1174, '08'], [1207, '13'], [1226, '18']];
  ax.forEach((a, i) => {
    s += txt(a[0], 694.5, a[1], 'ax axm');
    if (i < ax.length - 1) { const m = (a[0] + ax[i + 1][0]) / 2 + 3; s += line(m, 688, m, 697, 'sep2'); }
  });
  s += `<rect x="1236" y="689" width="28" height="7.500" class="col"/>` + txt(1236.5, 694.5, '0.023191C', 'ax');
  s += txt(1265.5, 694.5, 'RY', 'ax') + `<rect x="1272" y="691" width="4" height="4" class="lockp"/>`;
  document.getElementById('ichi').innerHTML = s;
})();

/* ---------- navigator strips ---------- */
(function () {
  let s = `<rect x="410" y="78" width="79" height="24" class="sp-w"/>`;
  const dates = [[26, 'Wed 7/21'], [72, 'Fri 7/30'], [107, 'Thu 8/12'], [157, 'Fri 8/13'], [181, 'Sun 8/15'], [207, 'Tue 8/17'], [235, 'Fri 8/20'], [259, 'Sat 8/28'], [300, 'Tue 8/31'], [331, 'Thu 9/2'], [356, 'Thu 9/9'], [388, 'Sun 9/12'], [411, 'Sat 8/18'], [447, 'Wed 9/22']];
  dates.forEach(d => { s += line(d[0] - 1, 78, d[0] - 1, 102, 'sp-v') + txt(d[0], 84, d[1], 'sp-t'); });
  const pts = [];
  for (let x = 25; x <= 462; x += 2) {
    const y = 91 - 3 * Math.sin(x / 38) + 2.2 * Math.sin(x * 1.3) + 1.4 * Math.sin(x * 2.9) + (x > 65 && x < 95 ? 4 : 0) + (x > 335 && x < 350 ? 3 : 0) + (x > 430 ? 3 : 0);
    pts.push([x, y]);
  }
  s += path(pts, 'sp-l');
  document.getElementById('strip1').innerHTML = s;

  let r = `<rect x="732" y="78" width="315" height="24" class="sp-w"/>`;
  r += txt(656, 84, '2021', 'sp-t');
  const Z2 = a => a.map(p => [420 + p[0] / 3, 40 + p[1] / 3]);
  r += path(Z2([[703, 140], [725, 160], [760, 158], [790, 165], [820, 157], [850, 165], [880, 175], [900, 170], [935, 172], [965, 145], [1000, 145], [1010, 130], [1030, 140], [1060, 145], [1100, 145], [1130, 135], [1190, 133], [1240, 155], [1290, 145]]).concat([[850, 88.3], [860, 90], [877, 93.3], [890, 95], [907, 99.3], [917, 94.3], [932, 96.7]]), 'sp-l');
  document.getElementById('strip2').innerHTML = r;
})();
```
